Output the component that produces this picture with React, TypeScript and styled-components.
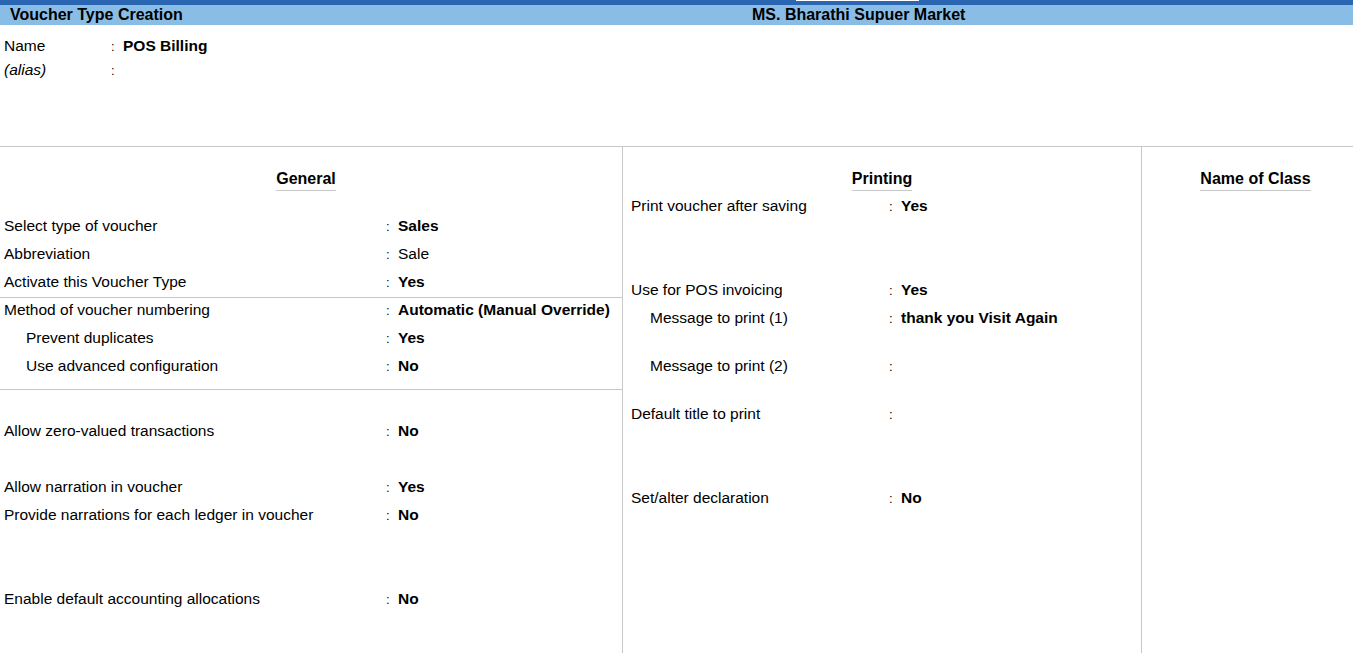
import React from 'react';
import styled, { createGlobalStyle } from 'styled-components';

type Row =
  | { kind: 'heading'; text: string; shift?: number }
  | { kind: 'divider'; gap?: number }
  | {
      kind: 'field';
      label: string;
      value?: string;
      strong?: boolean;
      indent?: boolean;
      gap?: number;
    };

const GENERAL: Row[] = [
  { kind: 'heading', text: 'General', shift: -10 },
  { kind: 'field', label: 'Select type of voucher', value: 'Sales', strong: true, gap: 20 },
  { kind: 'field', label: 'Abbreviation', value: 'Sale' },
  { kind: 'field', label: 'Activate this Voucher Type', value: 'Yes', strong: true },
  { kind: 'divider', gap: 1 },
  { kind: 'field', label: 'Method of voucher numbering', value: 'Automatic (Manual Override)', strong: true, gap: -2 },
  { kind: 'field', label: 'Prevent duplicates', value: 'Yes', strong: true, indent: true },
  { kind: 'field', label: 'Use advanced configuration', value: 'No', strong: true, indent: true },
  { kind: 'divider', gap: 9 },
  { kind: 'field', label: 'Allow zero-valued transactions', value: 'No', strong: true, gap: 27 },
  { kind: 'field', label: 'Allow narration in voucher', value: 'Yes', strong: true, gap: 28 },
  { kind: 'field', label: 'Provide narrations for each ledger in voucher', value: 'No', strong: true },
  { kind: 'field', label: 'Enable default accounting allocations', value: 'No', strong: true, gap: 56 },
];

const PRINTING: Row[] = [
  { kind: 'heading', text: 'Printing' },
  { kind: 'field', label: 'Print voucher after saving', value: 'Yes', strong: true },
  { kind: 'field', label: 'Use for POS invoicing', value: 'Yes', strong: true, gap: 56 },
  { kind: 'field', label: 'Message to print (1)', value: 'thank you Visit Again', strong: true, indent: true },
  { kind: 'field', label: 'Message to print (2)', indent: true, gap: 20 },
  { kind: 'field', label: 'Default title to print', gap: 20 },
  { kind: 'field', label: 'Set/alter declaration', value: 'No', strong: true, gap: 56 },
];

const App = () => {
  return (
    <>
      <GlobalStyle />
      <Screen>
        <TopStrip>
          <StripTab />
        </TopStrip>
        <TitleBar>
          <Title>Voucher Type Creation</Title>
          <Company>MS. Bharathi Supuer Market</Company>
        </TitleBar>

        <NameBlock>
          <NameRow>
            <NameLabel>Name</NameLabel>
            <Colon>:</Colon>
            <Value $strong>POS Billing</Value>
          </NameRow>
          <NameRow>
            <NameLabel $italic>(alias)</NameLabel>
            <Colon>:</Colon>
          </NameRow>
        </NameBlock>

        <Columns>
          <Column $width={623} $pad={4}>
            <Section rows={GENERAL} labelWidth={382} indent={22} />
          </Column>
          <Column $width={519} $pad={8}>
            <Section rows={PRINTING} labelWidth={258} indent={19} />
          </Column>
          <Column $pad={0}>
            <HeadingRow $shift={16}>
              <Heading>Name of Class</Heading>
            </HeadingRow>
          </Column>
        </Columns>
      </Screen>
    </>
  );
};

interface SectionProps {
  rows: Row[];
  labelWidth: number;
  indent: number;
}

const Section = ({ rows, labelWidth, indent }: SectionProps) => {
  return (
    <>
      {rows.map((row, i) => {
        if (row.kind === 'heading') {
          return (
            <HeadingRow key={i} $shift={row.shift ?? 0}>
              <Heading>{row.text}</Heading>
            </HeadingRow>
          );
        }
        if (row.kind === 'divider') {
          return <Divider key={i} $gap={row.gap ?? 0} />;
        }
        return (
          <FieldRow key={i} $gap={row.gap ?? 0}>
            <Label $width={labelWidth} $indent={row.indent ? indent : 0}>
              {row.label}
            </Label>
            <Colon>:</Colon>
            {row.value && <Value $strong={row.strong}>{row.value}</Value>}
          </FieldRow>
        );
      })}
    </>
  );
};

const GlobalStyle = createGlobalStyle`
  * {
    box-sizing: border-box;
  }

  body {
    margin: 0;
    background: #fff;
    color: #000;
    font-family: 'Liberation Sans', Arial, sans-serif;
    overflow: hidden;
  }
`;

const Screen = styled.div`
  display: flex;
  flex-direction: column;
  width: 1353px;
  height: 653px;
  overflow: hidden;
`;

const TopStrip = styled.div`
  height: 5px;
  background: #2b66b2;
  display: flex;
`;

const StripTab = styled.div`
  margin-left: 796px;
  width: 123px;
  height: 1px;
  background: #fff;
`;

const TitleBar = styled.div`
  height: 20px;
  background: #8abde6;
  display: grid;
  grid-template-columns: 752px 1fr;
  align-items: center;
  font-size: 16px;
  font-weight: 700;
`;

const Title = styled.div`
  padding-left: 10px;
`;

const Company = styled.div``;

const NameBlock = styled.div`
  height: 122px;
  padding-top: 9px;
  border-bottom: 1px solid #c8c8c8;
`;

const NameRow = styled.div`
  display: flex;
  align-items: center;
  height: 24px;
  padding-left: 4px;
  font-size: 15.5px;
`;

const NameLabel = styled.span<{ $italic?: boolean }>`
  width: 107px;
  font-style: ${props => (props.$italic ? 'italic' : 'normal')};
`;

const Columns = styled.div`
  flex: 1;
  display: flex;
`;

const Column = styled.div<{ $width?: number; $pad: number }>`
  width: ${props => (props.$width ? `${props.$width}px` : 'auto')};
  flex: ${props => (props.$width ? 'none' : '1')};
  padding-top: 17px;
  border-right: ${props => (props.$width ? '1px solid #c8c8c8' : 'none')};
  display: flex;
  flex-direction: column;

  & > div:not(:first-child) {
    padding-left: ${props => props.$pad}px;
  }
`;

const HeadingRow = styled.div<{ $shift: number }>`
  height: 28px;
  display: flex;
  justify-content: center;
  align-items: flex-start;
  padding-top: 6px;
  padding-left: ${props => Math.max(props.$shift, 0)}px;
  padding-right: ${props => Math.max(-props.$shift, 0)}px;
`;

const Heading = styled.span`
  font-size: 16px;
  font-weight: 700;
  line-height: 18px;
  padding-bottom: 2px;
  border-bottom: 1px solid #c8c8c8;
`;

const Divider = styled.div<{ $gap: number }>`
  height: 1px;
  margin-top: ${props => props.$gap}px;
  background: #c8c8c8;
`;

const FieldRow = styled.div<{ $gap: number }>`
  display: flex;
  align-items: center;
  height: 28px;
  margin-top: ${props => props.$gap}px;
  font-size: 15.5px;
  white-space: nowrap;
`;

const Label = styled.span<{ $width: number; $indent: number }>`
  width: ${props => props.$width}px;
  padding-left: ${props => props.$indent}px;
`;

const Colon = styled.span`
  width: 12px;
  font-size: 13px;
`;

const Value = styled.span<{ $strong?: boolean }>`
  font-weight: ${props => (props.$strong ? 700 : 400)};
`;

export default App;
